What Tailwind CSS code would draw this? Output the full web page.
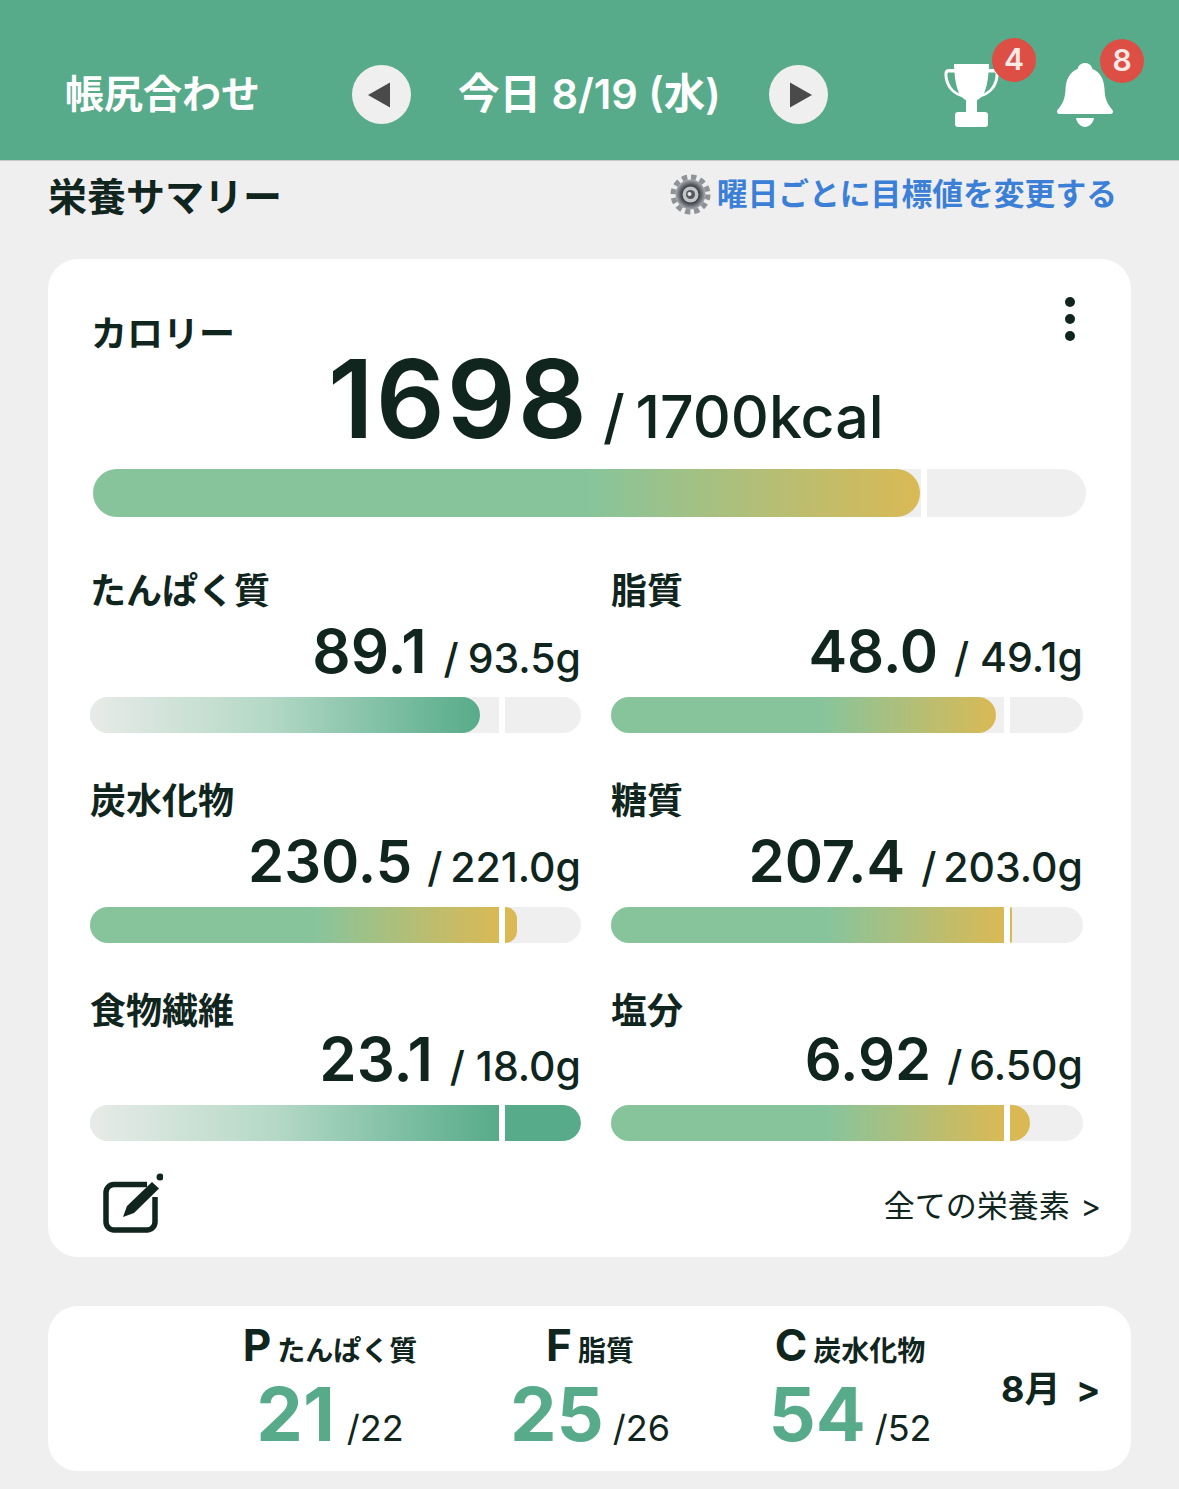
<!DOCTYPE html>
<html lang="ja">
<head>
    <meta charset="UTF-8">
    <meta name="viewport" content="width=device-width, initial-scale=1.0">
    <title>栄養サマリー</title>
    <script src="https://cdn.jsdelivr.net/npm/@tailwindcss/browser@4"></script>
</head>
<body class="bg-[#efefef] text-[#10251e] font-['Inter','Noto_Sans_CJK_JP',sans-serif] h-[1489px] overflow-hidden">

    <!-- ヘッダー -->
    <header class="h-[161px] bg-[#58ab8a] border-b border-[#c9c9c9] flex items-center text-white pl-[65px] pt-[29px]">
        <div class="w-[287px] text-[39px] font-semibold leading-none mb-[3px]">帳尻合わせ</div>
        <button class="w-[59px] h-[59px] rounded-full bg-[#efefef] flex items-center justify-center">
            <svg class="-ml-[5px]" width="24" height="26" viewBox="0 0 24 26"><path d="M1 13 23 .5v25z" fill="#4a4a4a"/></svg>
        </button>
        <div class="w-[358px] pl-[47px] text-[41.500px] font-semibold leading-none">今日 8/19 (水)</div>
        <button class="w-[59px] h-[59px] rounded-full bg-[#efefef] flex items-center justify-center">
            <svg class="ml-[4px]" width="24" height="26" viewBox="0 0 24 26"><path d="M23 13 1 .5v25z" fill="#4a4a4a"/></svg>
        </button>
        <div class="relative ml-[114px]">
            <svg class="block" width="58" height="66" viewBox="0 0 58 66" fill="#fff">
                <path d="M12 2h35c0 2 0 4-.2 5H52q4 0 4.500 4c.500 9-4 20-17 24-2 1.500-3.500 2.500-4.500 3.500V50H24V38.500c-1-1-2.500-2-4.500-3.500C6.500 31 2 20 2.500 11Q3 7 7 7h5.200C12 6 12 4 12 2zm.500 8.500H7c-1.200 0-1.600 .5-1.600 1.500 0 6 2.600 15 11.600 19.500-2.500-6-4-13-4.500-21zm34 0c-.500 8-2 15-4.500 21 9-4.500 11.600-13.500 11.600-19.500 0-1-.4-1.500-1.600-1.500z" fill-rule="evenodd"/>
                <rect x="13" y="50" width="33" height="15" rx="3"/>
            </svg>
            <span class="absolute left-[50px] top-[-24px] w-[44px] h-[44px] rounded-full bg-[#dd4f45] flex items-center justify-center text-[#fbe9e6] text-[30px] font-semibold">4</span>
        </div>
        <div class="relative ml-[57px]">
            <svg class="block" width="56" height="64" viewBox="0 0 56 64" fill="#fff">
                <path d="M28 0c4 0 6.500 2.500 7.500 6C43 9 47 16 47.500 26c.400 9 2 14 8 21 1 1.500.500 4-2 4H2.500c-2.500 0-3-2.500-2-4 6-7 7.600-12 8-21C9 16 13 9 20.500 6 21.500 2.500 24 0 28 0z"/>
                <path d="M19 55h18c-1 5.500-5 9-9 9s-8-3.500-9-9z"/>
            </svg>
            <span class="absolute left-[43px] top-[-24px] w-[44px] h-[44px] rounded-full bg-[#dd4f45] flex items-center justify-center text-[#fbe9e6] text-[30px] font-semibold">8</span>
        </div>
    </header>

    <!-- 見出し -->
    <div class="flex items-center justify-between h-[70px] pl-[48px] pr-[62px]">
        <h1 class="text-[39px] font-semibold leading-none">栄養サマリー</h1>
        <a class="flex items-center text-[30.800px] leading-none font-semibold text-[#3b80d6] mb-[3px]">
            <svg class="mr-[6px]" width="41" height="41" viewBox="0 0 41 41">
                <defs>
                    <radialGradient id="gearRing"><stop offset="0.55" stop-color="#3b3e43"/><stop offset="0.8" stop-color="#777a80"/><stop offset="1" stop-color="#a9acb0"/></radialGradient>
                </defs>
                <circle cx="20.500" cy="20.500" r="16.500" fill="none" stroke="#8f9296" stroke-width="7" stroke-dasharray="5 3.640"/>
                <circle cx="20.500" cy="20.500" r="15" fill="url(#gearRing)"/>
                <circle cx="20.500" cy="20.500" r="8" fill="#c3c5c8"/>
                <circle cx="20.500" cy="20.500" r="4.500" fill="#54575c"/>
                <circle cx="19.500" cy="20" r="2" fill="#e6e7e9"/>
            </svg>
            <span>曜日ごとに目標値を変更する</span>
        </a>
    </div>

    <!-- 栄養サマリーカード -->
    <section class="mx-[48px] mt-[28px] h-[998px] bg-white rounded-[30px] px-[42px] pt-[55px] relative">
        <div class="absolute right-[56px] top-[38px] flex flex-col gap-[7px]">
            <span class="w-[10px] h-[10px] rounded-full bg-[#10251e]"></span>
            <span class="w-[10px] h-[10px] rounded-full bg-[#10251e]"></span>
            <span class="w-[10px] h-[10px] rounded-full bg-[#10251e]"></span>
        </div>

        <div class="text-[36px] font-semibold leading-[40px] pl-[1px]">カロリー</div>
        <div class="h-[91px] leading-[89px] whitespace-nowrap pl-[238px]">
            <span class="text-[108px] font-semibold tracking-[2px]">1698</span><span class="text-[59px] font-medium ml-[14px] [word-spacing:-5px]">/ 1700kcal</span>
        </div>

        <div class="ml-[3px] mt-[24px] w-[993px] h-[48px] rounded-full bg-[#efefef] overflow-hidden flex">
            <div class="w-[827px] rounded-r-full bg-[linear-gradient(90deg,#88c49b_0%,#88c49b_60%,#dab955_100%)]"></div>
            <div class="w-[1px]"></div>
            <div class="w-[6px] bg-white"></div>
        </div>

        <div class="mt-[56px] grid grid-cols-[491px_472px] gap-x-[30px]">
            <!-- たんぱく質 -->
            <div>
                <div class="text-[36px] font-semibold leading-[36px]">たんぱく質</div>
                <div class="h-[84px] leading-[84px] text-right whitespace-nowrap [word-spacing:-2px]"><span class="text-[60px] font-semibold">89.1</span><span class="text-[41px] font-medium ml-[17px]">/ 93.5g</span></div>
                <div class="mt-[4px] h-[36px] rounded-full bg-[#efefef] overflow-hidden flex">
                    <div class="w-[390px] rounded-r-full bg-[linear-gradient(90deg,#e8ebe9_0%,#b5d9c6_45%,#6fb899_85%,#58ab8a_100%)]"></div>
                    <div class="w-[19px]"></div>
                    <div class="w-[6px] bg-white"></div>
                </div>
            </div>
            <!-- 脂質 -->
            <div>
                <div class="text-[36px] font-semibold leading-[36px]">脂質</div>
                <div class="h-[84px] leading-[84px] text-right whitespace-nowrap"><span class="text-[58px] font-semibold">48.0</span><span class="text-[41px] font-medium ml-[16px]">/ 49.1g</span></div>
                <div class="mt-[4px] h-[36px] rounded-full bg-[#efefef] overflow-hidden flex">
                    <div class="w-[385px] rounded-r-full bg-[linear-gradient(90deg,#88c49b_0%,#88c49b_55%,#dab955_100%)]"></div>
                    <div class="w-[8px]"></div>
                    <div class="w-[6px] bg-white"></div>
                </div>
            </div>
            <!-- 炭水化物 -->
            <div class="mt-[50px]">
                <div class="text-[36px] font-semibold leading-[36px]">炭水化物</div>
                <div class="h-[84px] leading-[84px] text-right whitespace-nowrap [word-spacing:-3px]"><span class="text-[58px] font-semibold">230.5</span><span class="text-[41px] font-medium ml-[15px]">/ 221.0g</span></div>
                <div class="mt-[4px] h-[36px] rounded-full bg-[#efefef] overflow-hidden flex">
                    <div class="w-[409px] bg-[linear-gradient(90deg,#88c49b_0%,#88c49b_55%,#dab955_100%)]"></div>
                    <div class="w-[6px] bg-white"></div>
                    <div class="w-[12px] rounded-r-full bg-[#dab955]"></div>
                </div>
            </div>
            <!-- 糖質 -->
            <div class="mt-[50px]">
                <div class="text-[36px] font-semibold leading-[36px]">糖質</div>
                <div class="h-[84px] leading-[84px] text-right whitespace-nowrap [word-spacing:-4px]"><span class="text-[58px] font-semibold">207.4</span><span class="text-[41px] font-medium ml-[16px]">/ 203.0g</span></div>
                <div class="mt-[4px] h-[36px] rounded-full bg-[#efefef] overflow-hidden flex">
                    <div class="w-[393px] bg-[linear-gradient(90deg,#88c49b_0%,#88c49b_55%,#dab955_100%)]"></div>
                    <div class="w-[6px] bg-white"></div>
                    <div class="w-[2px] rounded-r-full bg-[#dab955]"></div>
                </div>
            </div>
            <!-- 食物繊維 -->
            <div class="mt-[50px]">
                <div class="text-[36px] font-semibold leading-[36px]">食物繊維</div>
                <div class="h-[60px] leading-[60px] text-right whitespace-nowrap"><span class="text-[60px] font-semibold">23.1</span><span class="text-[41px] font-medium ml-[17px]">/ 18.0g</span></div>
                <div class="mt-[16px] h-[36px] rounded-full bg-[#efefef] overflow-hidden flex">
                    <div class="w-[409px] bg-[linear-gradient(90deg,#e8ebe9_0%,#b5d9c6_45%,#6fb899_85%,#58ab8a_100%)]"></div>
                    <div class="w-[6px] bg-white"></div>
                    <div class="w-[76px] rounded-r-full bg-[#58ab8a]"></div>
                </div>
            </div>
            <!-- 塩分 -->
            <div class="mt-[50px]">
                <div class="text-[36px] font-semibold leading-[36px]">塩分</div>
                <div class="h-[60px] leading-[60px] text-right whitespace-nowrap [word-spacing:-4px]"><span class="text-[58px] font-semibold">6.92</span><span class="text-[41px] font-medium ml-[16px]">/ 6.50g</span></div>
                <div class="mt-[16px] h-[36px] rounded-full bg-[#efefef] overflow-hidden flex">
                    <div class="w-[393px] bg-[linear-gradient(90deg,#88c49b_0%,#88c49b_55%,#dab955_100%)]"></div>
                    <div class="w-[6px] bg-white"></div>
                    <div class="w-[20px] rounded-r-full bg-[#dab955]"></div>
                </div>
            </div>
        </div>

        <div class="mt-[32px] flex items-center justify-between pl-[13px]">
            <svg width="60" height="60" viewBox="0 0 60 60" fill="none">
                <path d="M44 11.500H11a8 8 0 0 0-8 8V49a8 8 0 0 0 8 8h33a8 8 0 0 0 8-8V24" stroke="#10251e" stroke-width="5.500"/>
                <path d="M20 44l4-11L49 9l7 6.500L31 40z" fill="#10251e"/>
                <circle cx="57" cy="4" r="3.500" fill="#10251e"/>
            </svg>
            <span class="text-[31px] leading-none mt-[4px] mr-[-12px] [word-spacing:2px]">全ての栄養素 &gt;</span>
        </div>
    </section>

    <!-- PFCカード -->
    <section class="mx-[48px] mt-[49px] h-[165px] bg-white rounded-[30px] flex pl-[152px]">
        <div class="w-[260px] flex flex-col items-center pt-[17px]">
            <div class="flex items-baseline leading-none whitespace-nowrap"><span class="text-[44px] font-bold">P</span><span class="text-[28px] font-semibold ml-[6px]">たんぱく質</span></div>
            <div class="flex items-baseline leading-none whitespace-nowrap mt-[10px]"><span class="text-[74px] font-bold text-[#58ab8a]">21</span><span class="text-[36px] ml-[12px]">/22</span></div>
        </div>
        <div class="w-[260px] flex flex-col items-center pt-[17px]">
            <div class="flex items-baseline leading-none whitespace-nowrap"><span class="text-[44px] font-bold">F</span><span class="text-[28px] font-semibold ml-[6px]">脂質</span></div>
            <div class="flex items-baseline leading-none whitespace-nowrap mt-[10px]"><span class="text-[74px] font-bold text-[#58ab8a]">25</span><span class="text-[36px] ml-[9px]">/26</span></div>
        </div>
        <div class="w-[260px] flex flex-col items-center pt-[17px]">
            <div class="flex items-baseline leading-none whitespace-nowrap"><span class="text-[44px] font-bold">C</span><span class="text-[28px] font-semibold ml-[6px]">炭水化物</span></div>
            <div class="flex items-baseline leading-none whitespace-nowrap mt-[10px]"><span class="text-[74px] font-bold text-[#58ab8a]">54</span><span class="text-[36px] ml-[9px]">/52</span></div>
        </div>
        <div class="ml-[21px] text-[36px] font-bold leading-none whitespace-nowrap pt-[65px] [word-spacing:7px]">8月 &gt;</div>
    </section>
</body>
</html>
